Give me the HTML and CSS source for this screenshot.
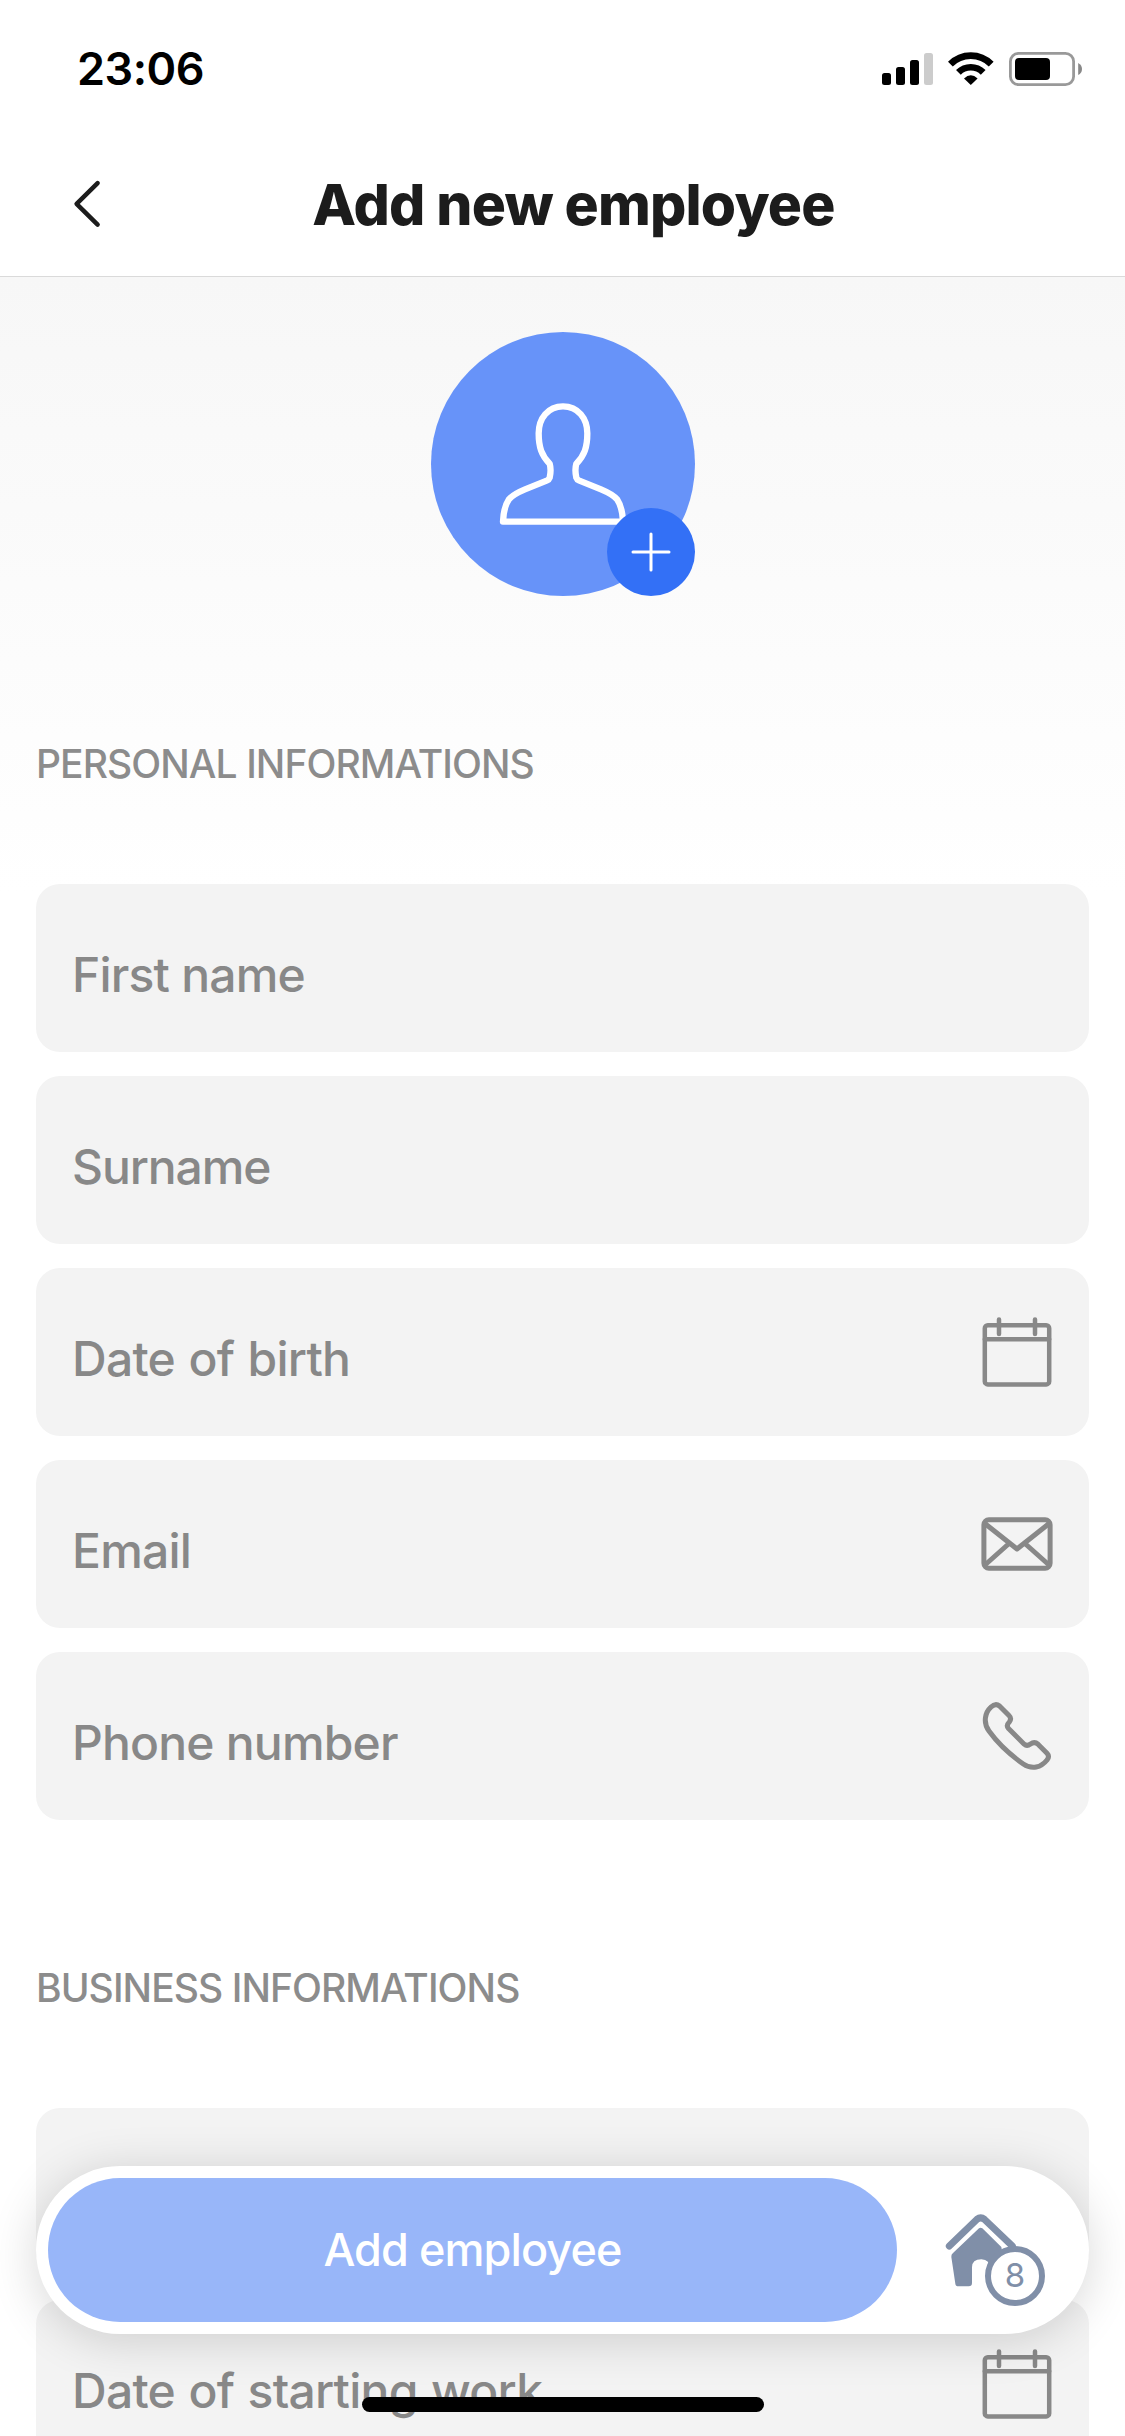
FILE: index.html
```html
<!DOCTYPE html>
<html lang="en">
<head>
<meta charset="utf-8">
<title>Add new employee</title>
<link rel="stylesheet" href="styles.css">
</head>
<body>
<div class="screen">
  <div class="status">
    <span class="time">23:06</span>
    <div class="indicators">
      <svg width="51" height="34" viewBox="0 0 51 34"><rect y="21" width="9" height="12" rx="2.5"/><rect x="14" y="15" width="9" height="18" rx="2.5"/><rect x="28" y="8" width="9" height="25" rx="2.5"/><rect x="42" y="1" width="9" height="32" rx="2.5" fill="#ccc"/></svg>
      <svg width="46" height="34" viewBox="0 0 46 34"><path d="M2.4 12.1A28.6 28.6 0 0 1 43.2 12.1M10.4 20.4A17.5 17.5 0 0 1 35.2 20.4" fill="none" stroke="#000" stroke-width="6.7"/><path d="M22.8 33L16 26.4Q22.8 19.9 29.6 26.4Z"/></svg>
      <svg width="73" height="34" viewBox="0 0 73 34"><rect x="1.4" y="1.4" width="63.2" height="31.2" rx="8.2" fill="none" stroke="#999" stroke-width="2.8"/><rect x="6" y="6" width="35" height="22" rx="4"/><path d="M69.2 11V23Q73 21 73 17T69.2 11Z" fill="#888"/></svg>
    </div>
  </div>
  <header class="header">
    <svg class="back" width="30" height="48" viewBox="0 0 30 48"><path d="M25.6 3.2L4.6 23.8L25.6 44.6" fill="none" stroke="#1c1c1c" stroke-width="4.5" stroke-linecap="round" stroke-linejoin="round"/></svg>
    <h1 class="title">Add new employee</h1>
  </header>
  <main class="content">
    <div class="avatar">
      <svg width="264" height="264" viewBox="93 66 792 792"><path d="M489 289C444 289 416 325 416 370C416 412 425 437 449 461C453 475 452 490 449 503Q447 509 440 512L375 538Q337 554 326 569Q311 591 309 635H669Q667 591 652 569Q641 554 603 538L538 512Q531 509 529 503C526 490 525 475 529 461C553 437 562 412 562 370C562 325 534 289 489 289Z" fill="none" stroke="#fff" stroke-width="19" stroke-linejoin="round"/></svg>
      <span class="avatar-add"><svg width="40" height="40" viewBox="0 0 40 40"><path d="M20 2V38M2 20H38" stroke="#fff" stroke-width="3" stroke-linecap="round"/></svg></span>
    </div>
    <h2 class="section">PERSONAL INFORMATIONS</h2>
    <div class="fields">
      <div class="field"><span class="label">First name</span></div>
      <div class="field"><span class="label label-tight">Surname</span></div>
      <div class="field"><span class="label label-date">Date of birth</span>
        <svg class="icon" width="72" height="72" viewBox="0 0 72 72"><rect x="3.8" y="9.2" width="64.4" height="59.2" rx="3"/><path d="M3.8 23.3H68.2M18 3.4V18M54 3.4V18"/></svg></div>
      <div class="field"><span class="label">Email</span>
        <svg class="icon icon-bold" width="72" height="72" viewBox="0 0 72 72"><rect x="2.9" y="11.7" width="66.2" height="48.5" rx="5"/><path d="M4.500 16L36 41L67.500 16M4.500 56.500L27.500 36M67.500 56.500L44.500 36"/></svg></div>
      <div class="field"><span class="label">Phone number</span>
        <svg class="icon icon-bold" width="72" height="72" viewBox="0 0 72 72"><path d="M18.5 6L28 15.5Q31 18.5 28.3 22Q24.8 25.5 27.5 28.5L43.2 44.2Q46 46.8 49.5 44Q53.5 41 57 44.2L66 53.2Q69 56.5 66 60C60 67.5 51 70 42.3 64Q21 49 8 31C1.5 22 4.5 12 9.7 7.3Q14.5 2.5 18.5 6Z"/></svg></div>
    </div>
    <h2 class="section">BUSINESS INFORMATIONS</h2>
    <div class="fields">
      <div class="field"></div>
      <div class="field"><span class="label label-date">Date of starting work</span>
        <svg class="icon" width="72" height="72" viewBox="0 0 72 72"><rect x="3.8" y="9.2" width="64.4" height="59.2" rx="3"/><path d="M3.8 23.3H68.2M18 3.4V18M54 3.4V18"/></svg></div>
    </div>
  </main>
  <div class="bar">
    <button class="submit">Add employee</button>
    <div class="home">
      <svg width="100" height="110" viewBox="0 0 300 330"><path d="M28 117L111 37Q122 28 133 37L217 117" fill="none" stroke="#808fa8" stroke-width="21" stroke-linecap="round"/><path d="M117 64Q122 60 127 64L184 120L205 240H150V188Q150 157 124 157Q96 157 96 181V228Q96 238 86 238H55Q47 238 46 230L34 150Q33 143 39 138Z" fill="#808fa8"/></svg>
      <span class="count">8</span>
    </div>
  </div>
  <div class="home-indicator"></div>
</div>
</body>
</html>
```
FILE: styles.css
```css
* { box-sizing: border-box; }
body { margin: 0; background: #fff; font-family: Inter, "Liberation Sans", sans-serif; }
svg { display: block; flex: none; }
h1, h2 { margin: 0; }

.screen { position: relative; width: 1125px; height: 2436px; overflow: hidden; background: #fff; }

.status { display: flex; justify-content: space-between; height: 132px; padding: 52px 43px 0 77px; }
.time { font-size: 45px; line-height: 34px; font-weight: 600; color: #000; letter-spacing: -0.5px; white-space: nowrap; }
.indicators { display: flex; gap: 15px; height: 34px; }

.header { display: grid; grid-template-columns: 120px 1fr 98px; align-items: center; height: 145px; padding: 0 72px; border-bottom: 1px solid #dadada; }
.title { justify-self: center; padding-top: 1px; font-size: 57px; line-height: 70px; font-weight: 800; color: #1c1c1c; letter-spacing: -0.8px; white-space: nowrap; }

.content { padding: 55px 36px 0; background: linear-gradient(#f7f7f7, #fff 615px); }
.avatar { position: relative; width: 264px; height: 264px; margin: 0 auto; border-radius: 50%; background: #6793f9; }
.avatar-add { position: absolute; right: 0; bottom: 0; display: flex; align-items: center; justify-content: center; width: 88px; height: 88px; border-radius: 50%; background: #3370f6; }

.section { margin-top: 144px; font-size: 39px; line-height: 48px; font-weight: 500; color: #8c8c8c; letter-spacing: -0.93px; white-space: nowrap; }
.fields { display: flex; flex-direction: column; gap: 24px; margin-top: 96px; }
.field { display: flex; justify-content: space-between; height: 168px; padding: 48px 36px 0; border-radius: 24px; background: #f3f3f3; }
.label { font-size: 48px; line-height: 85px; font-weight: 500; color: #888; white-space: nowrap; letter-spacing: -0.8px; }
.label-tight { letter-spacing: -1.1px; }
.label-date { letter-spacing: -0.75px; word-spacing: 1.4px; }
.icon { fill: none; stroke: #888; stroke-width: 4.5; stroke-linecap: round; stroke-linejoin: round; }
.icon-bold { stroke-width: 5; }

.bar { position: absolute; left: 36px; top: 2166px; display: flex; width: 1053px; height: 168px; padding: 12px; border-radius: 84px; background: #fff; box-shadow: 0 6px 48px rgba(0, 0, 0, .16); }
.submit { width: 849px; height: 144px; border: 0; border-radius: 72px; background: #98b6f9; color: #fff; font: 500 45px/60px Inter, "Liberation Sans", sans-serif; letter-spacing: -0.9px; }
.home { position: relative; width: 100px; margin: 29px 0 0 43px; }
.count { position: absolute; left: 45px; top: 39px; width: 60px; height: 60px; border: 6px solid #808fa8; border-radius: 50%; background: #fff; color: #808fa8; font-size: 33px; line-height: 47px; text-align: center; }
.home-indicator { position: absolute; left: 362px; top: 2397px; width: 402px; height: 15px; border-radius: 8px; background: #000; }
```
